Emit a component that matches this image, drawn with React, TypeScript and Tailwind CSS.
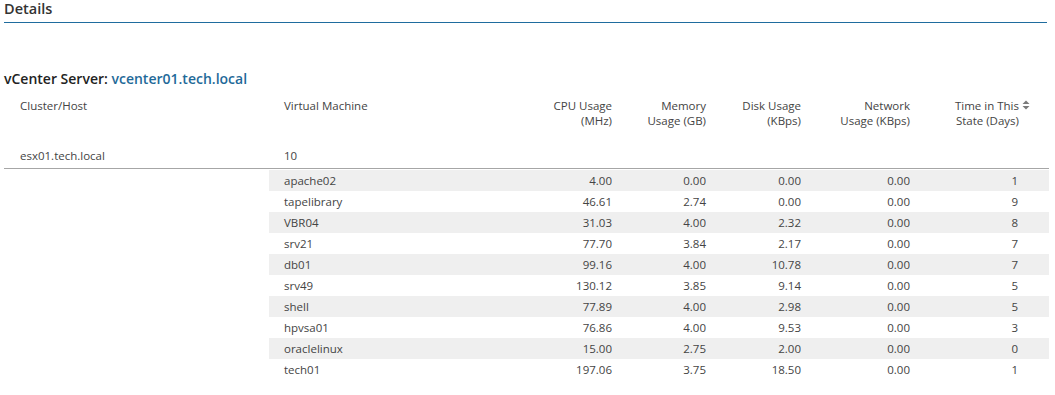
import React from "react";

const rows: [string, string, string, string, string, string][] = [
  ["apache02", "4.00", "0.00", "0.00", "0.00", "1"],
  ["tapelibrary", "46.61", "2.74", "0.00", "0.00", "9"],
  ["VBR04", "31.03", "4.00", "2.32", "0.00", "8"],
  ["srv21", "77.70", "3.84", "2.17", "0.00", "7"],
  ["db01", "99.16", "4.00", "10.78", "0.00", "7"],
  ["srv49", "130.12", "3.85", "9.14", "0.00", "5"],
  ["shell", "77.89", "4.00", "2.98", "0.00", "5"],
  ["hpvsa01", "76.86", "4.00", "9.53", "0.00", "3"],
  ["oraclelinux", "15.00", "2.75", "2.00", "0.00", "0"],
  ["tech01", "197.06", "3.75", "18.50", "0.00", "1"],
];

const grid = "grid grid-cols-[265px_243px_100px_94px_95px_109px_139px]";

function SortIcon() {
  return (
    <svg width="8" height="10" viewBox="0 0 8 10" className="absolute right-[19px] top-[2px]">
      <path d="M4 0.5 L7.5 4 L0.5 4 Z" fill="#7a7a7a" />
      <path d="M4 9.5 L7.5 6 L0.5 6 Z" fill="#7a7a7a" />
    </svg>
  );
}

export default function App() {
  return (
    <div
      className="w-[1055px] h-[395px] bg-white overflow-hidden text-[#444]"
      style={{ fontFamily: '"Open Sans", "Noto Sans", sans-serif' }}
    >
      <div className="pl-[4px] w-[1047px]">
        <div className="h-[22px] flex items-center text-[14.5px] font-semibold text-[#333] leading-none pb-[3px]">
          Details
        </div>
        <div className="h-px bg-[#1f6c9e]" />
        <div className="h-[45px]" />
        <div className="text-[14px] font-semibold text-[#222] leading-[22px]">
          vCenter Server: <span className="text-[#1f6a99]">vcenter01.tech.local</span>
        </div>
      </div>
      <div className="ml-[4px] w-[1045px] text-[11.5px]">
        <div className={`${grid} pt-[8px] h-[52px] text-[#444] leading-[15px]`}>
          <div className="pl-[16px]">Cluster/Host</div>
          <div className="pl-[15px]">Virtual Machine</div>
          <div className="text-right">CPU Usage<br />(MHz)</div>
          <div className="text-right">Memory<br />Usage (GB)</div>
          <div className="text-right">Disk Usage<br />(KBps)</div>
          <div className="text-right">Network<br />Usage (KBps)</div>
          <div className="text-right pr-[30px] relative">
            Time in This<br />State (Days)
            <SortIcon />
          </div>
        </div>
        <div className={`${grid} h-[26px] items-center leading-[15px]`}>
          <div className="pl-[16px]">esx01.tech.local</div>
          <div className="pl-[15px]">10</div>
        </div>
        <div className="h-px bg-[#a6a6a6]" />
        <div className="pt-[1px]">
          {rows.map((r, i) => (
            <div key={r[0]} className={`${grid} h-[21px] items-center leading-[15px]`}>
              <div />
              <div className={`pl-[15px] h-full flex items-center ${i % 2 === 0 ? "bg-[#efefef]" : ""}`}>{r[0]}</div>
              {r.slice(1, 5).map((v, j) => (
                <div key={j} className={`text-right h-full flex items-center justify-end ${i % 2 === 0 ? "bg-[#efefef]" : ""}`}>
                  {v}
                </div>
              ))}
              <div className={`text-right h-full flex items-center justify-end pr-[31px] ${i % 2 === 0 ? "bg-[#efefef]" : ""}`}>
                {r[5]}
              </div>
            </div>
          ))}
        </div>
      </div>
    </div>
  );
}
